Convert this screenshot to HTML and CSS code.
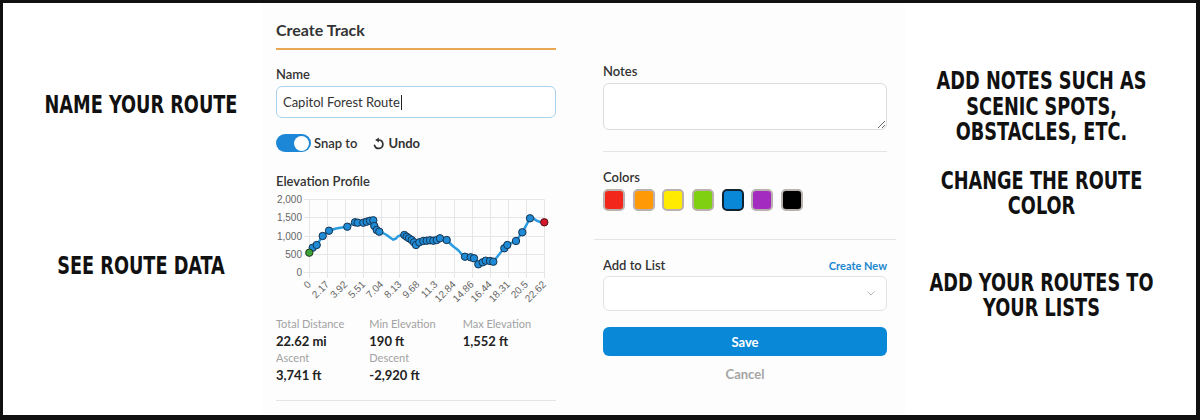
FILE: index.html
```html
<!DOCTYPE html>
<html lang="en">
<head>
<meta charset="utf-8">
<title>Create Track</title>
<link rel="stylesheet" href="styles.css">
</head>
<body>
<div class="frame">
  <aside class="notes notes-left">
    <p class="note n-name">NAME YOUR ROUTE</p>
    <p class="note n-data">SEE ROUTE DATA</p>
  </aside>

  <main class="panel">
    <section class="col col-main">
      <h1 class="title">Create Track</h1>
      <label class="label lbl-name">Name</label>
      <div class="input">Capitol Forest Route<span class="caret"></span></div>
      <div class="toolbar">
        <span class="toggle"><span class="knob"></span></span>
        <span class="snap">Snap to</span>
        <span class="undo">
          <svg class="undo-icon" viewBox="0 -1 12 13" width="12" height="13">
            <path d="M5.5 2 A4.2 4.2 0 1 1 1.6 7.4" fill="none" stroke="#333" stroke-width="1.7" stroke-linecap="round"/>
            <path d="M2.2 2 L5.9 -0.4 L5.9 4.4 Z" fill="#333"/>
          </svg>Undo</span>
      </div>
      <div class="label lbl-elev">Elevation Profile</div>
      <svg class="chart" viewBox="0 0 280 120" width="280" height="120">
        <g stroke="#e6e6e6" stroke-width="1">
          <line x1="28" y1="9.5" x2="268.5" y2="9.5"/>
          <line x1="28" y1="27.5" x2="268.5" y2="27.5"/>
          <line x1="28" y1="46.5" x2="268.5" y2="46.5"/>
          <line x1="28" y1="64.5" x2="268.5" y2="64.5"/>
          <line x1="28" y1="82.5" x2="268.5" y2="82.5"/>
          <line x1="33.5" y1="9.5" x2="33.5" y2="88"/>
          <line x1="51.5" y1="9.5" x2="51.5" y2="88"/>
          <line x1="69.5" y1="9.5" x2="69.5" y2="88"/>
          <line x1="87.5" y1="9.5" x2="87.5" y2="88"/>
          <line x1="105.5" y1="9.5" x2="105.5" y2="88"/>
          <line x1="123.5" y1="9.5" x2="123.5" y2="88"/>
          <line x1="141.5" y1="9.5" x2="141.5" y2="88"/>
          <line x1="159.5" y1="9.5" x2="159.5" y2="88"/>
          <line x1="178.5" y1="9.5" x2="178.5" y2="88"/>
          <line x1="196.5" y1="9.5" x2="196.5" y2="88"/>
          <line x1="214.5" y1="9.5" x2="214.5" y2="88"/>
          <line x1="232.5" y1="9.5" x2="232.5" y2="88"/>
          <line x1="250.5" y1="9.5" x2="250.5" y2="88"/>
          <line x1="268.5" y1="9.5" x2="268.5" y2="88"/>
        </g>
        <g class="ytick" text-anchor="end">
          <text x="26" y="13">2,000</text>
          <text x="26" y="31.2">1,500</text>
          <text x="26" y="49.5">1,000</text>
          <text x="26" y="67.8">500</text>
          <text x="26" y="86.2">0</text>
        </g>
        <g class="xtick" text-anchor="end">
          <text x="35.7" y="95" transform="rotate(-45 35.7 95)">0</text>
          <text x="53.8" y="95" transform="rotate(-45 53.8 95)">2.17</text>
          <text x="71.9" y="95" transform="rotate(-45 71.9 95)">3.92</text>
          <text x="89.9" y="95" transform="rotate(-45 89.9 95)">5.51</text>
          <text x="108" y="95" transform="rotate(-45 108 95)">7.04</text>
          <text x="126.1" y="95" transform="rotate(-45 126.1 95)">8.13</text>
          <text x="144.2" y="95" transform="rotate(-45 144.2 95)">9.68</text>
          <text x="162.3" y="95" transform="rotate(-45 162.3 95)">11.3</text>
          <text x="180.4" y="95" transform="rotate(-45 180.4 95)">12.84</text>
          <text x="198.4" y="95" transform="rotate(-45 198.4 95)">14.86</text>
          <text x="216.5" y="95" transform="rotate(-45 216.5 95)">16.44</text>
          <text x="234.6" y="95" transform="rotate(-45 234.6 95)">18.31</text>
          <text x="252.7" y="95" transform="rotate(-45 252.7 95)">20.5</text>
          <text x="270.7" y="95" transform="rotate(-45 270.7 95)">22.62</text>
        </g>
        <polyline class="route" points="33.3,62.7 36.7,57.7 40.7,55 46.7,46 53,40.7 60,38.5 66,37.5 71.3,36.7 79,32.3 81.7,32.7 87.3,32.7 90.7,31.7 94,30.7 97.3,30.3 98.3,36 100.7,40 103.3,41.7 107,43 110.7,45 114,47.5 117.3,49.7 120,48.5 122.3,46 128.3,45 130.7,46.7 133,48.3 135.7,50 138,52.3 140,55 143.3,52.3 147.3,51 150.7,50.7 154,50.3 157.3,50.7 160.7,50 164,48.3 170.7,50 175.7,55 178,57 180.7,59 183,61 185.7,64.3 189,66.7 194.7,67.3 198,68.3 202.3,74.3 206.7,72.3 209.7,70.7 214,71 217.3,71.7 221.3,66.7 225,62 228.3,58.3 231.3,55 240,51 246.3,42.3 254,28.3 257,28 260.7,30.7 264,32 268.3,32.3"/>
        <g class="pts">
          <circle cx="36.7" cy="57.7" r="3.7"/>
          <circle cx="40.7" cy="55" r="3.7"/>
          <circle cx="46.7" cy="46" r="3.7"/>
          <circle cx="53" cy="40.7" r="3.7"/>
          <circle cx="71.3" cy="36.7" r="3.7"/>
          <circle cx="79" cy="32.3" r="3.7"/>
          <circle cx="81.7" cy="32.7" r="3.7"/>
          <circle cx="87.3" cy="32.7" r="3.7"/>
          <circle cx="90.7" cy="31.7" r="3.7"/>
          <circle cx="94" cy="30.7" r="3.7"/>
          <circle cx="97.3" cy="30.3" r="3.7"/>
          <circle cx="98.3" cy="36" r="3.7"/>
          <circle cx="100.7" cy="40" r="3.7"/>
          <circle cx="103.3" cy="41.7" r="3.7"/>
          <circle cx="128.3" cy="45" r="3.7"/>
          <circle cx="130.7" cy="46.7" r="3.7"/>
          <circle cx="133" cy="48.3" r="3.7"/>
          <circle cx="135.7" cy="50" r="3.7"/>
          <circle cx="138" cy="52.3" r="3.7"/>
          <circle cx="140" cy="55" r="3.7"/>
          <circle cx="143.3" cy="52.3" r="3.7"/>
          <circle cx="147.3" cy="51" r="3.7"/>
          <circle cx="150.7" cy="50.7" r="3.7"/>
          <circle cx="154" cy="50.3" r="3.7"/>
          <circle cx="157.3" cy="50.7" r="3.7"/>
          <circle cx="160.7" cy="50" r="3.7"/>
          <circle cx="164" cy="48.3" r="3.7"/>
          <circle cx="170.7" cy="50" r="3.7"/>
          <circle cx="189" cy="66.7" r="3.7"/>
          <circle cx="194.7" cy="67.3" r="3.7"/>
          <circle cx="198" cy="68.3" r="3.7"/>
          <circle cx="202.3" cy="74.3" r="3.7"/>
          <circle cx="206.7" cy="72.3" r="3.7"/>
          <circle cx="209.7" cy="70.7" r="3.7"/>
          <circle cx="214" cy="71" r="3.7"/>
          <circle cx="217.3" cy="71.7" r="3.7"/>
          <circle cx="228.3" cy="58.3" r="3.7"/>
          <circle cx="231.3" cy="55" r="3.7"/>
          <circle cx="240" cy="51" r="3.7"/>
          <circle cx="246.3" cy="42.3" r="3.7"/>
          <circle cx="254" cy="28.3" r="3.7"/>
        </g>
        <circle class="pt-start" cx="33.3" cy="62.7" r="3.7"/>
        <circle class="pt-end" cx="268.3" cy="32.3" r="3.7"/>
      </svg>
      <div class="stats">
        <div class="stat"><div class="stat-label">Total Distance</div><div class="stat-value">22.62 mi</div></div>
        <div class="stat"><div class="stat-label">Min Elevation</div><div class="stat-value">190 ft</div></div>
        <div class="stat"><div class="stat-label">Max Elevation</div><div class="stat-value">1,552 ft</div></div>
        <div class="stat"><div class="stat-label">Ascent</div><div class="stat-value">3,741 ft</div></div>
        <div class="stat"><div class="stat-label">Descent</div><div class="stat-value">-2,920 ft</div></div>
      </div>
      <hr class="rule rule-stats">
    </section>

    <section class="col col-side">
      <label class="label lbl-notes">Notes</label>
      <textarea class="notes-box"></textarea>
      <hr class="rule rule-notes">
      <div class="label lbl-colors">Colors</div>
      <div class="swatches">
        <span class="swatch sw-red"></span>
        <span class="swatch sw-orange"></span>
        <span class="swatch sw-yellow"></span>
        <span class="swatch sw-green"></span>
        <span class="swatch sw-blue is-selected"></span>
        <span class="swatch sw-purple"></span>
        <span class="swatch sw-black"></span>
      </div>
      <hr class="rule rule-wide">
      <div class="list-head">
        <span class="label">Add to List</span>
        <span class="create-new">Create New</span>
      </div>
      <div class="select">
        <svg class="chev" viewBox="0 0 8 5" width="8" height="5"><polyline points="0.5,0.5 4,4 7.5,0.5" fill="none" stroke="#b5b5b5" stroke-width="1"/></svg>
      </div>
      <button class="save">Save</button>
      <div class="cancel">Cancel</div>
    </section>
  </main>

  <aside class="notes notes-right">
    <p class="note">ADD NOTES SUCH AS<br>SCENIC SPOTS,<br>OBSTACLES, ETC.</p>
    <p class="note n-color">CHANGE THE ROUTE<br>COLOR</p>
    <p class="note n-list">ADD YOUR ROUTES TO<br>YOUR LISTS</p>
  </aside>
</div>
</body>
</html>
```

FILE: styles.css
```css
* { box-sizing: border-box; }
html, body { margin: 0; padding: 0; }
body {
  width: 1200px;
  height: 420px;
  overflow: hidden;
  background: #fff;
  font-family: Lato, "Open Sans", sans-serif;
  color: #333;
}

.frame {
  display: flex;
  width: 1200px;
  height: 420px;
  border-style: solid;
  border-color: #111;
  border-width: 3px 4px 5px 3px;
  background: #fff;
}

/* annotations */
.notes { text-align: center; }
.notes-left { width: 259px; padding-left: 17px; padding-top: 90px; }
.notes-right { flex: 1; padding-right: 18px; padding-top: 66px; }
.note {
  margin: 0;
  font-family: "DejaVu Sans Condensed", "DejaVu Sans", sans-serif;
  font-stretch: condensed;
  font-weight: 700;
  font-size: 24px;
  line-height: 25.5px;
  color: #111;
  white-space: nowrap;
  transform: scaleX(0.82);
  transform-origin: 50% 50%;
}
.n-data { margin-top: 135px; }
.n-color { margin-top: 23px; }
.n-list { margin-top: 51px; }

/* panel */
.panel {
  width: 643px;
  display: flex;
  gap: 47px;
  padding: 0 18px 0 14px;
  background: #fdfdfd;
}
.col { display: flex; flex-direction: column; }
.col-main { width: 280px; padding-top: 17px; }
.col-side { width: 284px; padding-top: 60px; }

.title {
  margin: 0;
  font-size: 16px;
  line-height: 20px;
  font-weight: 700;
  color: #333;
  padding-bottom: 8px;
  border-bottom: 2px solid #eaa752;
}
.label {
  display: block;
  font-size: 13px;
  line-height: 16px;
  font-weight: 600;
  color: #333;
}
.lbl-name { margin-top: 16px; }
.input {
  margin-top: 4px;
  height: 32px;
  border: 1px solid #a9d3ec;
  border-radius: 6px;
  background: #fff;
  padding: 0 6px;
  display: flex;
  align-items: center;
  font-size: 13px;
  color: #333;
}
.caret { display: inline-block; width: 1px; height: 15px; background: #222; margin-left: 1px; }

.toolbar { margin-top: 16px; height: 18px; display: flex; align-items: center; font-size: 13px; }
.toggle {
  width: 35px;
  height: 18px;
  border-radius: 9px;
  background: #1c87d6;
  display: flex;
  justify-content: flex-end;
  align-items: center;
  padding: 0 1.5px;
}
.knob { width: 15px; height: 15px; border-radius: 50%; background: #fff; }
.snap { margin-left: 3px; font-weight: 600; }
.undo { margin-left: 16px; display: flex; align-items: center; gap: 3px; font-weight: 700; }
.undo-icon { display: block; }

.lbl-elev { margin-top: 21px; }
.chart { display: block; margin-top: 1px; width: 280px; height: 120px; }
.ytick text, .xtick text {
  font-family: "Liberation Sans", Arial, sans-serif;
  font-size: 10px;
  fill: #666;
}
.route { fill: none; stroke: #2c9ce0; stroke-width: 2.5; stroke-linejoin: round; stroke-linecap: round; }
.pts circle { fill: #1f8bd6; stroke: #17344f; stroke-width: 1; }
.pt-start { fill: #3da23a; stroke: #1d3a1d; stroke-width: 1; }
.pt-end { fill: #d8162c; stroke: #4a1218; stroke-width: 1; }

.stats {
  margin-top: 7px;
  display: grid;
  grid-template-columns: repeat(3, 1fr);
  row-gap: 2px;
}
.stat-label { font-size: 11px; line-height: 14px; color: #a2a2a2; }
.stat-value { margin-top: 2px; font-size: 13px; line-height: 16px; font-weight: 700; color: #222; }

.rule { margin: 0; border: 0; border-top: 1px solid #e4e4e4; height: 0; }
.rule-stats { margin-top: 17px; }

/* side column */
.notes-box {
  display: block;
  margin-top: 4px;
  width: 284px;
  height: 47px;
  border: 1px solid #dcdcdc;
  border-radius: 6px;
  background: #fff;
  font-family: inherit;
  resize: vertical;
}
.rule-notes { margin-top: 21px; }
.lbl-colors { margin-top: 17px; }
.swatches { margin-top: 4px; display: flex; gap: 7.7px; }
.swatch {
  width: 22px;
  height: 22px;
  border: 2px solid #bab1ae;
  border-radius: 5px;
}
.sw-red { background: #f2261a; }
.sw-orange { background: #ff9a06; }
.sw-yellow { background: #ffeb00; }
.sw-green { background: #7fd010; }
.sw-blue { background: #0a88d8; }
.sw-purple { background: #a42bc0; }
.sw-black { background: #000; }
.swatch.is-selected { border-color: #0f2333; }

.rule-wide { margin: 28px -9px 0; }
.list-head {
  margin-top: 17px;
  display: flex;
  justify-content: space-between;
  align-items: baseline;
}
.create-new { font-size: 11px; font-weight: 700; color: #1b87cf; }
.select {
  margin-top: 3px;
  height: 35px;
  border: 1px solid #e2e2e2;
  border-radius: 6px;
  background: #fff;
  display: flex;
  justify-content: flex-end;
  align-items: center;
  padding-right: 11px;
}
.chev { display: block; }
.save {
  margin-top: 16px;
  height: 29px;
  width: 100%;
  border: 0;
  border-radius: 6px;
  background: #0a88d8;
  color: #fff;
  font-family: inherit;
  font-size: 13px;
  font-weight: 700;
}
.cancel {
  margin-top: 10px;
  text-align: center;
  font-size: 13px;
  line-height: 16px;
  font-weight: 700;
  color: #a5a5a5;
}
```
